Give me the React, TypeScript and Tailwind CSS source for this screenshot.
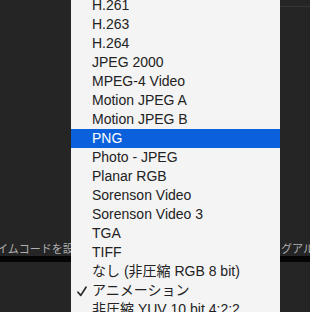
const codecs = [
  "H.261",
  "H.263",
  "H.264",
  "JPEG 2000",
  "MPEG-4 Video",
  "Motion JPEG A",
  "Motion JPEG B",
  "PNG",
  "Photo - JPEG",
  "Planar RGB",
  "Sorenson Video",
  "Sorenson Video 3",
  "TGA",
  "TIFF",
  "なし (非圧縮 RGB 8 bit)",
  "アニメーション",
  "非圧縮 YUV 10 bit 4:2:2",
];

const selected = "PNG";
const checked = "アニメーション";

const Check = () => (
  <svg width="10" height="11" viewBox="0 0 10 11" className="absolute left-[6px] top-[5px]">
    <path d="M1 6.2 L3.8 9.4 L9 1.2" fill="none" stroke="#2a2a2a" strokeWidth="1.7" strokeLinecap="round" strokeLinejoin="round" />
  </svg>
);

const SidePanel = ({ label, align }: { label: string; align: "left" | "right" }) => (
  <div className="flex flex-col h-full bg-[#252525] overflow-hidden">
    <div className="h-[6px]" />
    <div className={align === "right" ? "h-px bg-[#363636]" : "h-px bg-[#252525]"} />
    <div className="h-[236px]" />
    <div className="h-[13px] flex items-center overflow-hidden whitespace-nowrap">
      <span
        className={
          align === "left"
            ? "text-[11px] leading-[13px] text-[#b0b0b0] ml-[-3px]"
            : "text-[11px] leading-[13px] text-[#b0b0b0] ml-[1px]"
        }
      >
        {label}
      </span>
    </div>
    <div className="h-[6px] bg-[#050505]" />
    <div className="flex-1 bg-[#252525]" />
  </div>
);

export default function App() {
  return (
    <div
      className="w-[310px] h-[312px] flex overflow-hidden bg-[#252525]"
      style={{ fontFamily: '"Liberation Sans", "Noto Sans CJK JP", sans-serif' }}
    >
      <div className="w-[71px] shrink-0">
        <SidePanel label="イムコードを設定" align="left" />
      </div>

      <div className="w-[209px] shrink-0 bg-[#f4f4f4] overflow-hidden">
        <ul className="mt-[-4px]">
          {codecs.map((name) => {
            const isSel = name === selected;
            return (
              <li
                key={name}
                className={
                  isSel
                    ? "relative h-[19px] pl-[21px] flex items-center bg-[#0b61dc] text-white text-[14px] whitespace-nowrap"
                    : "relative h-[19px] pl-[21px] flex items-center text-[#222222] text-[14px] whitespace-nowrap"
                }
              >
                {name === checked && <Check />}
                {name}
              </li>
            );
          })}
        </ul>
      </div>

      <div className="w-[30px] shrink-0">
        <SidePanel label="グアルファ" align="right" />
      </div>
    </div>
  );
}
